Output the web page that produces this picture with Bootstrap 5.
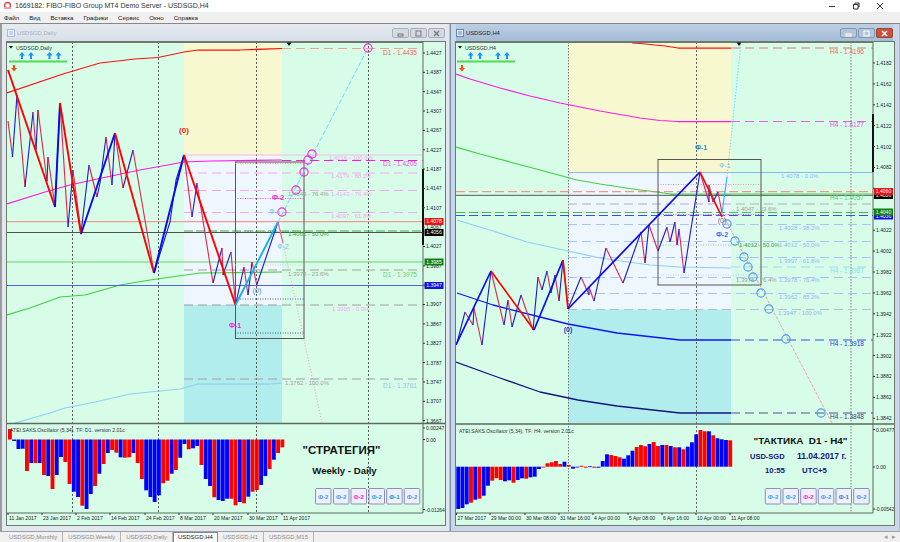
<!DOCTYPE html>
<html lang="ru">
<head>
    <meta charset="UTF-8">
    <meta name="viewport" content="width=device-width, initial-scale=1.0">
    <title>1669182: FIBO-FIBO Group MT4 Demo Server - USDSGD,H4</title>
    <link href="https://cdn.jsdelivr.net/npm/bootstrap@5.3.2/dist/css/bootstrap.min.css" rel="stylesheet">
    <style>
        body { background-color: #f0f0f0; font-family: "Liberation Sans", Arial, sans-serif; font-size: 6px; height: 542px; overflow: hidden; }
        .app-title { height: 12px; background-color: #fff; color: #333; line-height: 12px; font-size: 7px; }
        .app-ctrl { width: 24px; }
        .app-menu { height: 11px; background-color: #f0f0f0; column-gap: 10px; }
        .app-menu a { color: #222; padding: 0; line-height: 11px; font-size: 6.2px; }
        .mdi-area { height: 508px; background-color: #b8bcc4; border-top: 1px solid #888; }
        .mdi-win { height: 507px; }
        .mdi-left { width: 449px; padding-right: 4px; background-color: #e2e8ef; border-left: 2px solid #9a9a9a; padding-left: 5px; }
        .mdi-right { width: 449px; margin-left: 1px; padding-left: 5px; padding-right: 6px; background-color: #c8d8ea; border-left: 1px solid #7f93ad; }
        .win-cap { height: 18px; font-size: 5.8px; }
        .cap-ico { margin-right: 2px; }
        .cap-off { color: #a8b0ba; background: linear-gradient(#e6ebf1, #d6dee8); }
        .cap-on { color: #223; background: linear-gradient(#bccfe4, #a3bad6); }
        .win-btn { width: 17px; height: 10px; padding: 0; margin-left: 1px; border: 1px solid #a9b0ba; border-radius: 2px; background-color: #d4dae2; line-height: 0; }
        .cap-on .win-btn { background-color: #b3c5db; border-color: #8297b2; }
        .cap-on .win-close { background-color: #c9523f; border-color: #9c4436; }
        .chart-svg { display: block; width: 438px; height: 483px; background-color: #d7fde8; outline: 1px solid #6c7a6c; }
        .chart-svg text { font-family: "Liberation Sans", Arial, sans-serif; }
        .mdi-tabs { height: 11px; background-color: #f0f0f0; border-top: 1px solid #a0a0a0; padding-left: 4px; flex-wrap: nowrap; }
        .mdi-tabs .nav-link { color: #8a8a8a; padding: 0 5px; margin: 0; border: 0; border-right: 1px solid #b4b4b4; border-radius: 0; line-height: 10px; font-size: 6px; white-space: nowrap; }
        .mdi-tabs .nav-link.active { color: #111; background-color: #fff; border: 1px solid #888; border-bottom: 0; line-height: 9px; padding: 0 4px; }
        .tab-arrows { color: #999; font-size: 7px; line-height: 10px; }
    </style>
</head>
<body>
    <div class="d-flex flex-column">
        <div class="app-title d-flex align-items-center">
            <svg class="ms-1 me-1" width="7" height="8" viewBox="0 0 7 8"><circle cx="3.5" cy="3.5" r="3" fill="none" stroke="#e04040" stroke-width="1.4"/><rect x="0" y="5" width="7" height="2" fill="#e8a0a0"/></svg>
            <span>1669182: FIBO-FIBO Group MT4 Demo Server - USDSGD,H4</span>
            <div class="ms-auto d-flex pe-2">
                <div class="app-ctrl text-center"><svg width="8" height="8"><path d="M1 4.5h6" stroke="#333"/></svg></div>
                <div class="app-ctrl text-center"><svg width="8" height="8"><path d="M1.5 2.5h4.5v4.5h-4.5zM3 2.5v-1.500h4v4h-1" fill="none" stroke="#333"/></svg></div>
                <div class="app-ctrl text-center"><svg width="8" height="8"><path d="M1 1l6 6M7 1l-6 6" stroke="#333"/></svg></div>
            </div>
        </div>
        <ul class="app-menu nav ps-1">
            <li class="nav-item"><a class="nav-link" href="#">Файл</a></li>
            <li class="nav-item"><a class="nav-link" href="#">Вид</a></li>
            <li class="nav-item"><a class="nav-link" href="#">Вставка</a></li>
            <li class="nav-item"><a class="nav-link" href="#">Графики</a></li>
            <li class="nav-item"><a class="nav-link" href="#">Сервис</a></li>
            <li class="nav-item"><a class="nav-link" href="#">Окно</a></li>
            <li class="nav-item"><a class="nav-link" href="#">Справка</a></li>
        </ul>
        <div class="mdi-area d-flex">
            <!-- Окно Daily -->
            <div class="mdi-win mdi-left">
                <div class="win-cap cap-off d-flex align-items-center">
                    <svg class="cap-ico" width="8" height="8"><rect x=".5" y=".5" width="7" height="7" fill="#e8eef4" stroke="#a8bfd8"/><path d="M2 5h4M2 3h4" stroke="#a8bfd8"/></svg>
                    <span>USDSGD,Daily</span>
                    <div class="ms-auto d-flex">
                        <button class="btn win-btn"><svg width="7" height="7"><rect x="1" y="4" width="5" height="2" fill="none" stroke="#777"/></svg></button>
                        <button class="btn win-btn"><svg width="7" height="7"><rect x="1" y="1" width="5" height="5" fill="none" stroke="#777"/></svg></button>
                        <button class="btn win-btn"><svg width="7" height="7"><path d="M1 1l5 5M6 1l-5 5" stroke="#777" stroke-width="1.400"/></svg></button>
                    </div>
                </div>
                <svg id="chartDaily" class="chart-svg" viewBox="7 42 438 483"></svg>
            </div>
            <!-- Окно H4 -->
            <div class="mdi-win mdi-right">
                <div class="win-cap cap-on d-flex align-items-center">
                    <svg class="cap-ico" width="8" height="8"><rect x=".5" y=".5" width="7" height="7" fill="#e8eef4" stroke="#5f86b3"/><path d="M2 5h4M2 3h4" stroke="#5f86b3"/></svg>
                    <span>USDSGD,H4</span>
                    <div class="ms-auto d-flex">
                        <button class="btn win-btn"><svg width="7" height="7"><rect x="1" y="4" width="5" height="2" fill="none" stroke="#fff"/></svg></button>
                        <button class="btn win-btn"><svg width="7" height="7"><rect x="1" y="1" width="5" height="5" fill="none" stroke="#fff"/></svg></button>
                        <button class="btn win-btn win-close"><svg width="7" height="7"><path d="M1 1l5 5M6 1l-5 5" stroke="#fff" stroke-width="1.400"/></svg></button>
                    </div>
                </div>
                <svg id="chartH4" class="chart-svg" viewBox="456 42 438 483"></svg>
            </div>
        </div>
        <ul class="nav mdi-tabs">
            <li class="nav-item"><a class="nav-link" href="#">USDSGD,Monthly</a></li>
            <li class="nav-item"><a class="nav-link" href="#">USDSGD,Weekly</a></li>
            <li class="nav-item"><a class="nav-link" href="#">USDSGD,Daily</a></li>
            <li class="nav-item"><a class="nav-link active" href="#">USDSGD,H4</a></li>
            <li class="nav-item"><a class="nav-link" href="#">USDSGD,H1</a></li>
            <li class="nav-item"><a class="nav-link" href="#">USDSGD,M15</a></li>
            <li class="nav-item ms-auto tab-arrows pe-1">&#9666; &nbsp;&#9656;</li>
        </ul>
    </div>

    <script>
        // Цвета индикаторов
        const RED = "#ff1010", MAG = "#ff1ae0", GRN = "#3fd23f", SKY = "#8fd0f2", BLU = "#1414f0", NAVY = "#14147a";
        const PINK = "#f4a8f0", GRAY = "#a0a0a0", LBL = "#8fb8f8";

        const ln = (x1, y1, x2, y2, c, w = 1, d = "") =>
            `<line x1="${x1}" y1="${y1}" x2="${x2}" y2="${y2}" stroke="${c}" stroke-width="${w}" stroke-dasharray="${d}"/>`;
        const poly = (pts, c, w = 1.25, d = "") =>
            `<polyline points="${pts}" fill="none" stroke="${c}" stroke-width="${w}" stroke-dasharray="${d}" stroke-linejoin="round"/>`;
        const box = (x, y, w, h, f) => `<rect x="${x}" y="${y}" width="${w}" height="${h}" fill="${f}"/>`;
        const txt = (x, y, s, c = "#222", size = 5.1, weight = "normal", anchor = "start") =>
            `<text x="${x}" y="${y}" fill="${c}" font-size="${size}" font-weight="${weight}" text-anchor="${anchor}">${s}</text>`;
        const ring = (x, y, c) => `<circle cx="${x}" cy="${y}" r="4.100" fill="none" stroke="${c}" stroke-width="1.100"/>`;

        // Зигзаг: вверх синий, вниз красный
        function zig(pts, w, up, down) {
            let out = "";
            for (let i = 1; i < pts.length; i++) {
                const [a, b] = [pts[i - 1], pts[i]];
                out += ln(a[0], a[1], b[0], b[1], b[1] < a[1] ? up : down, w);
            }
            return out;
        }

        function arrows(xs, barX) {
            let out = "";
            xs.forEach(x => {
                out += `<polygon points="${x},52 ${x + 3},55.500 ${x + 1},55.500 ${x + 1},59 ${x - 1},59 ${x - 1},55.500 ${x - 3},55.500" fill="#1e90ff"/>`;
            });
            out += box(barX, 60.500, 58, 2, "#4fdc4f");
            out += `<polygon points="${barX + 4},65 ${barX + 6},65 ${barX + 6},68 ${barX + 8},68 ${barX + 5},71.500 ${barX + 2},68 ${barX + 4},68" fill="#ff4a10"/>`;
            return out;
        }

        function histo(bars, x0, step, zero) {
            let out = "";
            bars.forEach((b, i) => {
                const y = Math.min(b[0], zero), h = Math.max(Math.abs(b[0] - zero), 0.8);
                out += box((x0 + i * step).toFixed(2), y.toFixed(1), step - 0.4, h.toFixed(1), b[1] ? "#ff0000" : "#0000ff");
            });
            return out;
        }

        function axis(x, first, step, labels) {
            let out = "";
            labels.forEach((s, i) => {
                const y = first + i * step;
                out += ln(x, y, x + 2, y, "#333");
                if (s) out += txt(x + 3, y + 1.900, s);
            });
            return out;
        }

        function flags(x, list) {
            return list.map(f => box(x, f[0] - 3.500, 19, 7, f[2]) + txt(x + 9.500, f[0] + 1.900, f[1], "#fff", 5.1, "normal", "middle")).join("");
        }

        function dates(list) {
            return list.map(d => ln(d[0], 513, d[0], 515, "#333") + txt(d[0] + 1, 520, d[1])).join("");
        }

        function buttons(xs) {
            const names = [["Ф-2", "#3a9cf8"], ["Ф-2", "#3a9cf8"], ["Ф-2", "#ff18e0"], ["Ф-2", "#3a9cf8"], ["Ф-1", "#2a84e0"], ["Ф-2", "#3a9cf8"]];
            return xs.map((x, i) =>
                `<rect x="${x}" y="488.500" width="15.500" height="15.500" rx="1" fill="#eef0fa" stroke="#8c8cc0"/>` +
                txt(x + 7.700, 498.500, names[i][0], names[i][1], 6, "bold", "middle")).join("");
        }

        const COL = { r: 1, b: 0 };
        const bars = s => s.trim().split(/\s+/).map(t => [parseFloat(t), COL[t.slice(-1)]]);

        // ---- Дневной график ----
        const dailyOsc = bars(`429r 441b 449b 448.7b 471r 463b 463r 463b 475r 476b 489r 475b 457b 462r 484r 491.700b 497b 505.700r 509b 494b 486r 473.700b 464r 453b 450r 452.700r 457.300b 457.700r 457.300r 453b 463r 479r 490.300b 497b 502b 495.300b 483.300r 480.700r 473.700b 470r 457.700b 444b 449.300r 448.300b 446b 465r 479b 486b 497.300r 500b 501b 498.700b 498.700r 505.300r 502b 503.300r 496.700b 491.700r 490r 485b 476b 469r 459.700b 453r 447.300r`);
        const dailyThin = [[8,121],[12.5,157],[17,95],[25,187],[33,112],[36,150],[38,110],[47,181],[48,157],[55,207],[60,103],[68,227],[73,170],[81,233],[89,165],[97,197],[100,183],[106,137],[112,185],[115,133],[123,188],[133,150],[154,273],[170,222],[176,180],[184,155],[192,217],[197,183],[213,283],[222,248],[223,275],[231,252],[235.5,305],[244,267],[248,295],[252,262],[256.7,285],[278,222]];
        const dailyThick = [[8,70],[55,207],[60,103],[81,234],[115,133],[154,273],[184,155],[235.5,305]];

        let d = "";
        d += box(184, 42, 98, 113, "#f8f8d0") + box(184, 155, 98, 150, "#eef6fe") + box(184, 305, 98, 118, "#b0edec");
        [72.5, 158.5, 256.5, 368.5].forEach(x => d += ln(x, 42, x, 513, "#333", 0.8, "2 2"));
        // Скользящие и их продолжение
        d += poly("7,93 63,74 100,63 135,59 158,57.500 184,52 198,50 240,50 282,48.500", RED);
        d += ln(282, 48.500, 423, 48.500, "#f0a090", 1.2, "9 5");
        d += poly("7,204 45,192 70,185 97,179 140,170 184,162 210,161 282,160", MAG);
        d += ln(282, 160.500, 423, 160.500, MAG, 1, "9 5");
        d += ln(184, 155, 423, 155, PINK, 0.8);
        d += poly("7,315 30,308 60,297 85,295 120,285 150,280 200,273 282,272", GRN);
        d += poly("15,423 50,413 65,408 95,402 130,394 180,389 198,384 270,384 282,383", SKY);
        // Уровни Фибоначчи
        d += ln(184, 173, 423, 173, PINK, 1, "9 5") + ln(184, 190.500, 423, 190.500, PINK, 1, "9 5") + ln(184, 212.500, 423, 212.500, PINK, 1, "9 5");
        d += ln(184, 231, 423, 231, "#40b040", 1, "9 3") + ln(184, 270, 423, 270, GRAY, 1, "9 5") + ln(184, 305, 423, 305, GRAY, 1, "9 5") + ln(184, 379, 423, 379, GRAY, 1, "9 5");
        // Ценовые уровни на всю ширину
        d += ln(7, 221.700, 423, 221.700, "#f09a90", 1.2) + ln(7, 232.500, 423, 232.500, "#505050", 1) + ln(7, 262, 423, 262, "#70d070", 1.2) + ln(7, 285.500, 423, 285.500, "#5060e0", 1.2);
        // Рамка и точечные уровни
        d += `<rect x="235.500" y="162" width="68.500" height="176.500" fill="none" stroke="#555" stroke-width="1"/>`;
        d += ln(235, 163.500, 304, 163.500, "#f08080", 0.8, "1 1.500") + ln(235, 198.500, 304, 198.500, MAG, 0.8, "1 1.500") + ln(235, 232, 304, 232, "#109010", 0.8, "1 1.500");
        d += ln(235, 265, 304, 265, "#c0c8e0", 0.8, "1 1.500") + ln(235, 299, 304, 299, "#3030d0", 0.8, "1 1.500") + ln(235, 333, 304, 333, "#303060", 0.8, "1 1.500");
        // Зигзаги
        d += zig(dailyThin, 1.1, "#1c1cc8", "#dc2850");
        d += zig(dailyThick, 1.9, "#0a0af0", "#ff0000");
        d += ln(235.500, 305, 278, 222, "#10b0f0", 1.8);
        d += ln(278, 222, 368, 48, "#70dcf4", 1, "5 2");
        d += ln(278, 222, 283, 243, "#f06090", 1.2) + ln(283, 243, 322, 423, "#f0a0b0", 1, "1 2");
        [[282, 212], [296, 190], [304, 172], [308, 160], [312, 154], [368, 48]].forEach(c => d += ring(c[0], c[1], MAG));
        // Подписи
        d += txt(184, 133, "(0)", "#f02020", 8, "bold", "middle");
        d += txt(278, 199.500, "Ф-2", MAG, 7, "bold", "middle") + txt(235, 327.500, "Ф-1", MAG, 7, "bold", "middle");
        d += txt(275, 213.500, "Ф-1", "#80b8f0", 7, "normal", "middle") + txt(283, 248.500, "Ф-2", "#80b8f0", 7, "normal", "middle");
        d += txt(257, 292.500, "(0)", "#6080c0", 7, "normal", "middle");
        const fibD = [[329, 160, "1.4216 - 100.0%", PINK], [331, 178, "1.4179 - 88.2%", PINK], [288, 196, "1.4143 - 76.4%", GRAY], [331, 196, "1.4143 - 76.4%", PINK], [331, 218, "1.4097 - 61.8%", PINK], [288, 236, "1.4061 - 50.0%", "#48a048"], [288, 276, "1.3978 - 23.6%", GRAY], [332, 311, "1.3905 - 0.0%", PINK], [285, 385, "1.3762 - 100.0%", GRAY]];
        fibD.forEach(f => d += txt(f[0], f[1], f[2], f[3], 6));
        d += txt(383, 54.500, "D1 - 1.4435", "#f06060", 6.5) + txt(383, 166, "D1 - 1.4205", "#e850e0", 6.5) + txt(383, 277, "D1 - 1.3975", "#70d070", 6.5) + txt(383, 388, "D1 - 1.3761", "#90c8e8", 6.5);
        // Ось, разделитель и подвал
        d += ln(7, 42.500, 423, 42.500, "#6c7a6c") + ln(423, 42, 423, 513, "#5c6a5c") + ln(7, 423.500, 445, 423.500, "#5c6a5c", 1.500) + ln(7, 513, 423, 513, "#5c6a5c");
        d += box(422, 169, 2, 76, "#111");
        d += `<polygon points="286.500,42.500 291.500,42.500 289,46" fill="#111"/>`;
        d += axis(423, 53, 19.35, ["1.4427", "1.4387", "1.4347", "1.4307", "1.4267", "1.4227", "1.4187", "1.4147", "1.4107", "1.4067", "1.4027", "1.3987", "", "1.3907", "1.3867", "1.3827", "1.3787", "1.3747", "1.3707", "1.3667"]);
        d += flags(424.500, [[221.500, "1.4078", "#f01010"], [232.500, "1.4056", "#000"], [262, "1.3985", "#108010"], [285.500, "1.3947", "#1010e0"]]);
        d += `<polygon points="9,46 13,46 11,48.500" fill="#111"/>` + txt(16, 49.500, "USDSGD,Daily", "#333", 5.3);
        d += arrows([22, 31, 49.500, 58.500], 9);
        d += histo(dailyOsc, 8, 4.257, 439.500);
        d += txt(10, 431.500, "ATEI.SAKS.Oscillator (5,34). TF: D1. version 2.01c", "#333");
        d += ln(423, 428, 425, 428, "#333") + txt(426, 430, "0.00247") + ln(423, 439.500, 425, 439.500, "#333") + txt(426, 441.500, "0.00") + ln(423, 509.500, 425, 509.500, "#333") + txt(425.500, 511.500, "-0.01264", "#222", 4.9);
        d += txt(341.500, 454, "\"СТРАТЕГИЯ\"", "#111", 11.500, "bold", "middle") + txt(344.500, 473.500, "Weekly - Daily", "#111", 9.600, "bold", "middle");
        d += buttons([315.500, 333.500, 351, 369, 386.700, 404.300]);
        d += dates([[8, "11 Jan 2017"], [42, "23 Jan 2017"], [76, "2 Feb 2017"], [110, "14 Feb 2017"], [145, "24 Feb 2017"], [179, "8 Mar 2017"], [213, "20 Mar 2017"], [248, "30 Mar 2017"], [282, "11 Apr 2017"]]);
        document.getElementById("chartDaily").innerHTML = d;

        // ---- График H4 ----
        const h4Osc = bars(`509b 508b 504.300b 502.700r 499.700b 498.700r 495.700b 485.700b 480.700r 478.300r 480r 481.300b 480.300b 482.700r 480b 478.300b 478.700r 477.300b 476.700b 469b 467.500r 463.300r 462.300r 461r 464r 461.700b 465r 468.700b 467.300b 465.700r 467.700r 466.300b 467.700r 467.700b 461b 454.300b 455r 456r 457.300r 458.700b 455.300b 450.700b 447r 445r 446.300r 444b 442r 446r 445b 445r 446b 447.300r 447.300b 449.300r 446.700b 442.300b 434.300b 430r 431.300r 431.300b 435.300r 438.300b 439.300b 440b 440.300r`);
        const h4Thin = [[457,343],[465,312],[473,325],[474,308],[482,345],[491,271],[504,325],[508,300],[512,327],[521,295],[533,330],[538,277],[542,290],[547,271],[551,293],[555,275],[559,301],[563,260],[568,309],[581,277],[589,295],[589,287],[594,301],[606,248],[623,283],[641,232],[645,263],[649,225],[658,251],[667,227],[670,242],[675,222],[677,245],[679,229],[684,273],[700,172],[709,202],[709,185],[713,202],[718,192],[722,213]];
        const h4Thick = [[456,345],[491,271],[534,330],[563,260],[568,309],[700,172],[722,217]];

        let h = "";
        h += box(568, 42, 163, 130.500, "#f8f8d0") + box(568, 172.500, 163, 137, "#eef6fe") + box(568, 309.500, 163, 114, "#b0edec");
        h += ln(568.500, 42, 568.500, 513, "#777", 1, "1.500 1.500") + ln(696.500, 42, 696.500, 513, "#444", 0.8, "2 2") + ln(851, 42, 851, 513, "#8a9a8a", 1.2, "1.500 1.500");
        h += poly("632,43 640,43.500 665,46 678,48 731,48", RED) + ln(731, 48, 873, 48, "#f07060", 1, "9 5");
        h += poly("456,74 470,79 500,88 530,96 560,103 600,111 640,118 660,120.500 678,121.500 731,121.500", MAG) + ln(731, 121.500, 873, 121.500, "#e860e0", 1, "9 5");
        h += poly("456,147 480,154 510,162 540,170 577,180 600,184 640,190 657,192 677,195 731,195", GRN);
        h += poly("457,220 493,231 527,242 568,251 600,258 650,265 680,267 731,268", SKY) + ln(731, 267, 873, 267, "#a0dcf0", 1, "9 5");
        h += poly("457,293 493,305 540,317 568,324 617,333 680,340 731,340", BLU, 1.3) + ln(731, 340, 873, 340, "#3050e0", 1, "9 5");
        h += poly("456,362 500,378 540,392 578,400 617,406 680,413 731,413", NAVY, 1.3) + ln(731, 413, 873, 413, "#505090", 1, "9 5");
        // Уровни
        h += ln(568, 172.500, 873, 172.500, "#88b8f8", 1);
        [[224.500], [241.500], [257.500], [277.500], [293.500]].forEach(y => h += ln(568, y[0], 873, y[0], "#a8c4f8", 1, "9 5"));
        h += ln(568, 204, 873, 204, "#b0b0b8", 1, "9 5") + ln(568, 309.500, 873, 309.500, "#b8c0c8", 1, "9 5");
        h += ln(456, 191.700, 873, 191.700, "#f08070", 1, "9 4") + ln(456, 195.300, 873, 195.300, "#555", 1) + ln(670, 194, 873, 194, "#50d050", 1.2);
        h += ln(456, 212.500, 873, 212.500, "#40c040", 1, "9 4") + ln(456, 215.500, 873, 215.500, "#3050f0", 1, "9 4");
        h += `<rect x="658" y="159.500" width="103" height="125.500" fill="none" stroke="#555" stroke-width="1"/>`;
        h += ln(658, 184.500, 761, 184.500, "#f08080", 0.8, "1 1.500") + ln(658, 214.500, 761, 214.500, MAG, 0.8, "1 1.500") + ln(658, 245, 761, 245, "#70d870", 0.8, "1 1.500") + ln(658, 275, 761, 275, "#b0d0f0", 0.8, "1 1.500");
        // Зигзаги
        h += zig(h4Thin, 1.1, "#1c1cc8", "#dc2850");
        h += zig(h4Thick, 1.7, "#0a0af0", "#ff0000");
        h += ln(722, 213, 727, 177, "#30b8f4", 1.2) + ln(727, 177, 741, 43, "#70dcf4", 1, "1.500 1.500");
        h += ln(722, 213, 832, 423, "#f0a0b0", 1, "3 1.500");
        [[727, 224], [735, 241], [744, 257], [748, 267], [753, 277], [761, 293], [769, 309], [786, 339], [821, 413]].forEach(c => h += ring(c[0], c[1], "#4a9cf0"));
        // Подписи
        h += txt(701, 149.500, "Ф-1", "#2a84e0", 7, "bold", "middle") + txt(725, 168, "Ф-1", "#80b8f0", 7, "normal", "middle") + txt(722, 237, "Ф-2", "#2a84e0", 7, "bold", "middle");
        h += txt(722, 222.500, "(0)", "#607090", 7, "normal", "middle") + txt(568, 331.500, "(0)", "#2040c0", 7, "bold", "middle");
        [[781, 178, "1.4078 - 0.0%", LBL], [736, 210.500, "1.4047 - 23.6%", GRAY], [779, 230, "1.4028 - 38.2%", LBL], [739, 247, "1.4012 - 50.0%", "#48a048"], [779, 247, "1.4012 - 50.0%", LBL], [779, 263, "1.3997 - 61.8%", LBL], [736, 282, "1.3978 - 76.4%", GRAY], [779, 282, "1.3978 - 76.4%", LBL], [779, 299, "1.3962 - 88.2%", LBL], [778, 315, "1.3947 - 100.0%", LBL]].forEach(f => h += txt(f[0], f[1], f[2], f[3], 6));
        h += txt(830, 54, "H4 - 1.4196", "#f06060", 6.5) + txt(830, 127, "H4 - 1.4127", "#e850e0", 6.5) + txt(830, 200, "H4 - 1.4057", "#60d060", 6.5) + txt(830, 273, "H4 - 1.3987", "#90d8ec", 6.5) + txt(830, 346, "H4 - 1.3918", "#2040e0", 6.5) + txt(830, 419, "H4 - 1.3848", "#404070", 6.5);
        // Ось
        h += ln(456, 42.500, 873, 42.500, "#6c7a6c") + ln(873, 42, 873, 513, "#5c6a5c") + ln(456, 424, 894, 424, "#5c6a5c", 1.500) + ln(456, 513, 873, 513, "#5c6a5c");
        h += box(872, 114, 2, 58, "#111");
        h += `<polygon points="736.500,42.500 741.500,42.500 739,46" fill="#111"/>`;
        h += axis(873, 63, 20.9, ["1.4182", "1.4162", "1.4142", "1.4122", "1.4102", "1.4082", "", "", "1.4022", "1.4002", "1.3982", "1.3962", "1.3942", "1.3922", "1.3902", "1.3882", "1.3862", "1.3842"]);
        h += flags(874, [[216, "1.4036", "#1010e0"], [212, "1.4040", "#108010"], [195.500, "1.4056", "#000"], [191.500, "1.4060", "#f01010"]]);
        h += `<polygon points="458,46 462,46 460,48.500" fill="#111"/>` + txt(465, 49.500, "USDSGD,H4", "#333", 5.3);
        h += arrows([470.700, 480, 498, 507], 457);
        h += histo(h4Osc, 456.300, 4.25, 466.700);
        h += txt(459, 432.500, "ATEI.SAKS.Oscillator (5,34). TF: H4. version 2.01c", "#333");
        h += ln(873, 429.500, 875, 429.500, "#333") + txt(876, 431.500, "0.00477") + ln(873, 467, 875, 467, "#333") + txt(876, 469, "0.00") + ln(873, 509, 875, 509, "#333") + txt(875, 511, "-0.00542", "#222", 4.9);
        h += txt(800.500, 443.500, "\"ТАКТИКА&#160;&#160;D1 - H4\"", "#111", 9.900, "bold", "middle");
        h += txt(750, 458.500, "USD-SGD", "#14147a", 7.500, "bold") + txt(797, 458.500, "11.04.2017 г.", "#14147a", 8.500, "bold");
        h += txt(765, 473, "10:55", "#14147a", 7.800, "bold") + txt(802, 473, "UTC+5", "#14147a", 7.800, "bold");
        h += buttons([765.300, 783, 800.700, 818.300, 836, 853.700]);
        h += dates([[456.500, "27 Mar 2017"], [490, "29 Mar 00:00"], [525, "30 Mar 08:00"], [559, "31 Mar 16:00"], [593, "4 Apr 00:00"], [628, "5 Apr 08:00"], [662, "6 Apr 16:00"], [696, "10 Apr 00:00"], [730, "11 Apr 08:00"]]);
        document.getElementById("chartH4").innerHTML = h;
    </script>
    <script src="https://cdn.jsdelivr.net/npm/bootstrap@5.3.2/dist/js/bootstrap.bundle.min.js"></script>
</body>
</html>
